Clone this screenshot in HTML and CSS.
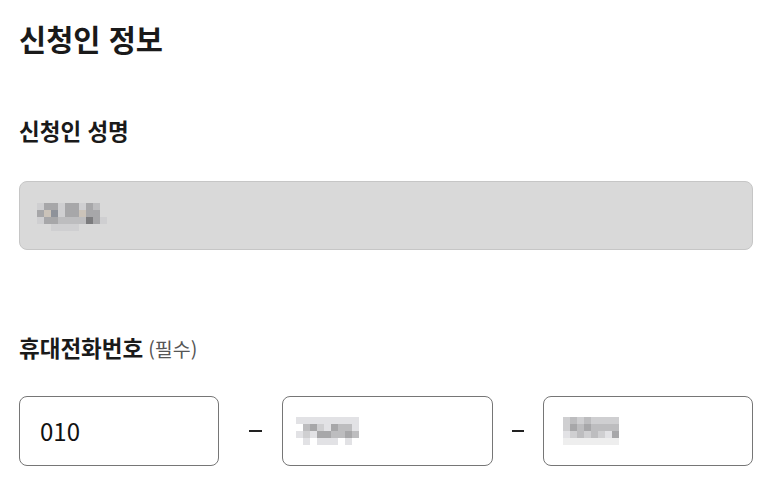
FILE: index.html
```html
<!DOCTYPE html>
<html lang="ko">
<head>
<meta charset="utf-8">
<title>신청인 정보</title>
<link rel="stylesheet" href="styles.css">
</head>
<body>
<main class="page">
  <h1 class="title">신청인 정보</h1>

  <section class="group">
    <h2 class="label">신청인 성명</h2>
    <div class="field field-disabled">
      <div class="mosaic cols-10">
        <i class="s2"></i><i class="s4"></i><i class="s4"></i><i class="s2"></i><i class="s4"></i><i class="s4"></i><i class="s2"></i><i class="s4"></i><i class="s3"></i><i></i>
        <i class="s4"></i><i class="s7"></i><i class="s5"></i><i class="s2"></i><i class="s4"></i><i class="s4"></i><i class="s7"></i><i class="s4"></i><i class="s4"></i><i></i>
        <i class="s2"></i><i class="s4"></i><i class="s4"></i><i class="s3"></i><i class="s3"></i><i class="s3"></i><i class="s3"></i><i class="s6"></i><i class="s4"></i><i class="s2"></i>
        <i></i><i></i><i class="s2"></i><i class="s2"></i><i class="s2"></i><i class="s2"></i><i></i><i></i><i></i><i></i>
      </div>
    </div>
  </section>

  <section class="group group-phone">
    <h2 class="label">휴대전화번호<span class="req">(필수)</span></h2>
    <div class="phone-row">
      <div class="field field-phone field-first"><span class="value">010</span></div>
      <span class="dash dash-first"></span>
      <div class="field field-phone field-mid">
        <div class="mosaic cols-9">
          <i class="s1"></i><i class="s1"></i><i class="s1"></i><i class="s1"></i><i class="s1"></i><i class="s1"></i><i class="s1"></i><i class="s1"></i><i class="s1"></i>
          <i></i><i class="s3"></i><i class="s4"></i><i class="s2"></i><i class="s1"></i><i class="s4"></i><i class="s3"></i><i class="s3"></i><i class="s1"></i>
          <i class="s1"></i><i class="s2"></i><i class="s1"></i><i class="s4"></i><i class="s4"></i><i class="s3"></i><i class="s3"></i><i class="s4"></i><i class="s3"></i>
          <i></i><i class="s1"></i><i></i><i class="s1"></i><i class="s1"></i><i class="s1"></i><i></i><i class="s1"></i><i></i>
        </div>
      </div>
      <span class="dash dash-second"></span>
      <div class="field field-phone field-last">
        <div class="mosaic cols-8">
          <i class="s2"></i><i class="s3"></i><i class="s2"></i><i class="s3"></i><i class="s2"></i><i class="s2"></i><i class="s2"></i><i class="s2"></i>
          <i class="s2"></i><i class="s4"></i><i class="s3"></i><i class="s4"></i><i class="s3"></i><i class="s3"></i><i class="s3"></i><i class="s3"></i>
          <i class="s1"></i><i class="s2"></i><i class="s3"></i><i class="s2"></i><i class="s3"></i><i class="s2"></i><i class="s1"></i><i class="s4"></i>
          <i class="s0"></i><i class="s0"></i><i class="s0"></i><i class="s0"></i><i class="s0"></i><i class="s0"></i><i class="s0"></i><i class="s0"></i>
        </div>
      </div>
    </div>
  </section>
</main>
</body>
</html>
```

FILE: styles.css
```css
* { box-sizing: border-box; }

html, body {
  margin: 0;
  padding: 0;
  background: #ffffff;
}

body {
  font-family: "Noto Sans CJK KR", "Noto Sans", sans-serif;
  color: #1a1a1a;
}

.page {
  width: 783px;
  padding: 18px 30px 0 19px;
}

.title {
  margin: 0;
  font-size: 29.5px;
  line-height: 40px;
  font-weight: 700;
  color: #1a1a1a;
}

.group {
  margin-top: 57px;
}

.group-phone {
  margin-top: 82px;
}

.label {
  margin: 0;
  font-size: 22.5px;
  line-height: 30px;
  font-weight: 700;
  color: #1a1a1a;
}

.req {
  margin-left: 5px;
  font-size: 19.5px;
  font-weight: 400;
  color: #555555;
}

.field {
  border-radius: 8px;
  border: 1px solid #767676;
  background: #ffffff;
}

.field-disabled {
  margin-top: 36px;
  height: 69px;
  background: #d9d9d9;
  border-color: #c6c6c6;
  padding: 21px 0 0 17px;
}

.phone-row {
  margin-top: 32px;
  display: flex;
  align-items: center;
}

.field-phone {
  height: 70px;
  display: flex;
  align-items: center;
}

.field-first {
  width: 200px;
  padding-left: 20px;
}

.field-mid {
  width: 211px;
  padding-left: 13px;
}

.field-last {
  flex: 1;
  padding-left: 19px;
}

.value {
  font-size: 24px;
  color: #111111;
  line-height: 1;
}

.dash {
  height: 2px;
  background: #222222;
}

.dash-first {
  width: 13px;
  margin: 0 20px 0 30px;
}

.dash-second {
  width: 12px;
  margin: 0 19px 0 19px;
}

.mosaic {
  display: grid;
  grid-auto-rows: 7px;
}

.cols-10 { grid-template-columns: repeat(10, 7px); }
.cols-9 { grid-template-columns: repeat(9, 7px); }
.cols-8 { grid-template-columns: repeat(8, 7px); }

.mosaic i { display: block; }
.s0 { background: #eeeeee; }
.s1 { background: #e2e2e5; }
.s2 { background: #cfcfd1; }
.s3 { background: #bdbdbf; }
.s4 { background: #a7a7a9; }
.s5 { background: #8e929a; }
.s6 { background: #7c7c7e; }
.s7 { background: #cbc3b9; }
```
